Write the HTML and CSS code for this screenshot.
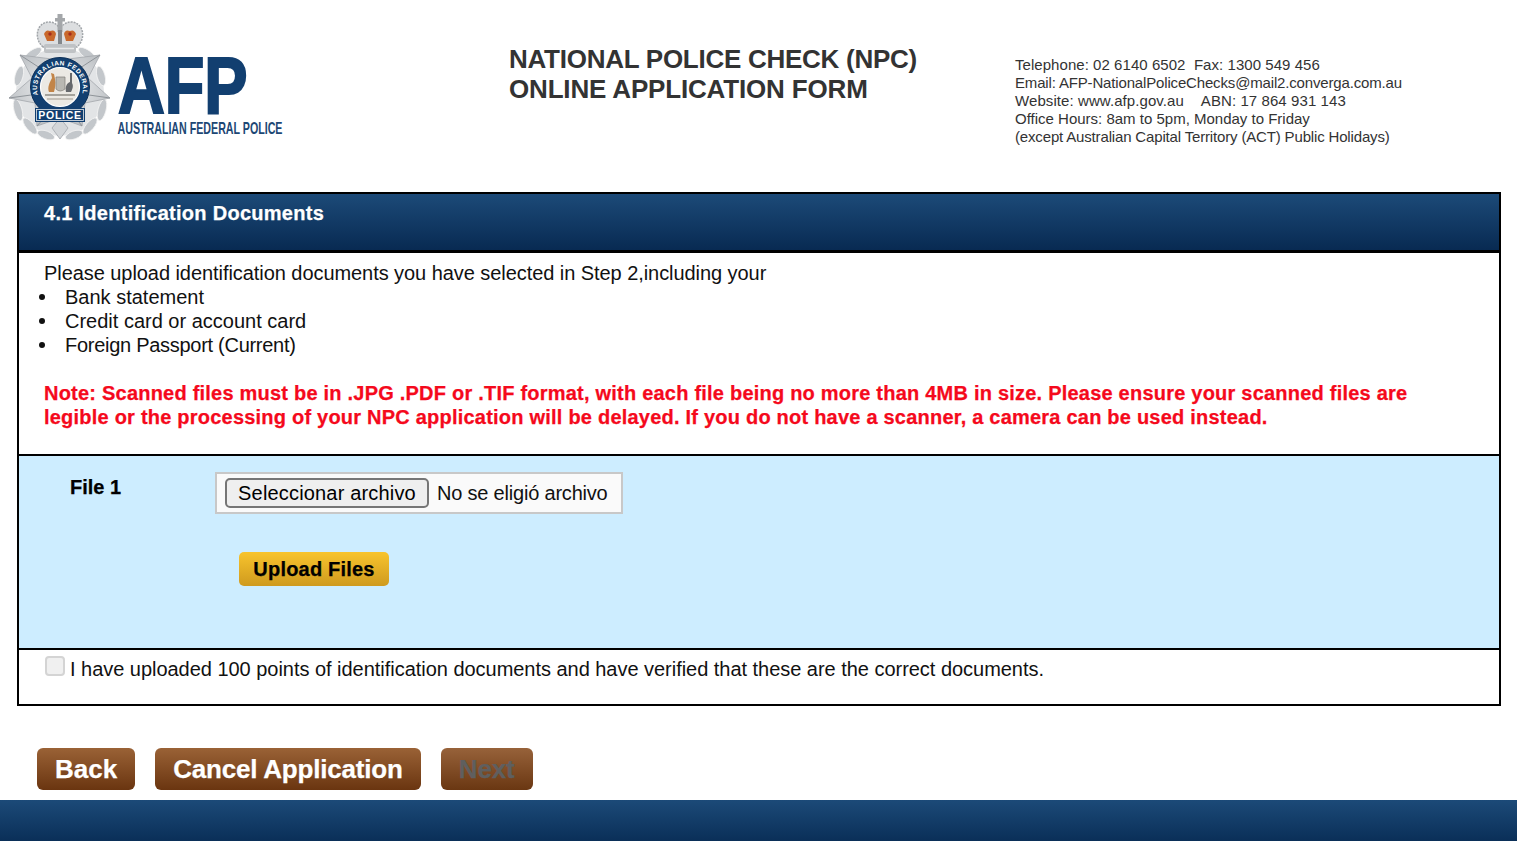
FILE: index.html
```
<!DOCTYPE html>
<html lang="en">
<head>
<meta charset="utf-8">
<title>National Police Check Online Application Form</title>
<link rel="stylesheet" href="styles.css">
</head>
<body>
<header class="masthead">
  <svg class="logo" viewBox="0 0 300 150" width="300" height="150" role="img" aria-label="Australian Federal Police">
    <defs>
      <radialGradient id="silver" cx="50%" cy="45%" r="60%">
        <stop offset="0" stop-color="#f4f5f6"/><stop offset="1" stop-color="#b9bdc1"/>
      </radialGradient>
      <path id="arcText" d="M38 95 A23 23 0 1 1 82 95"/>
    </defs>
    <circle cx="60" cy="92" r="44" fill="#e2e4e6"/>
    <g fill="#c3c7cb" stroke="#f4f4f4" stroke-width=".8">
      <ellipse cx="19" cy="76" rx="4" ry="10" transform="rotate(15 19 76)"/>
      <ellipse cx="101" cy="76" rx="4" ry="10" transform="rotate(-15 101 76)"/>
      <ellipse cx="18" cy="110" rx="4" ry="11" transform="rotate(-15 18 110)"/>
      <ellipse cx="102" cy="110" rx="4" ry="11" transform="rotate(15 102 110)"/>
      <ellipse cx="30" cy="126" rx="4" ry="10" transform="rotate(-40 30 126)"/>
      <ellipse cx="90" cy="126" rx="4" ry="10" transform="rotate(40 90 126)"/>
      <ellipse cx="46" cy="135" rx="4" ry="9" transform="rotate(-70 46 135)"/>
      <ellipse cx="74" cy="135" rx="4" ry="9" transform="rotate(70 74 135)"/>
      <ellipse cx="33" cy="54" rx="4" ry="10" transform="rotate(55 33 54)"/>
      <ellipse cx="87" cy="54" rx="4" ry="10" transform="rotate(-55 87 54)"/>
    </g>
    <path d="M60 60 L100 55 L88 78 L110 98 L85 103 L82 126 L60 118 L37 126 L35 103 L9 98 L32 78 L20 55Z" fill="url(#silver)" stroke="#a3a7ac" stroke-width=".8"/>
    <path d="M60 118 L52 128 L60 139 L68 128Z" fill="#d3d6d9" stroke="#a3a7ac" stroke-width=".8"/>
    <path d="M20 55 L40 68M100 55 L80 68M9 98 L31 95M110 98 L89 95M37 126 L44 118M82 126 L76 118" stroke="#8f9499" stroke-width="1" fill="none"/>
    <path d="M43 47 C33 38 37 22 49 22 C54 22 58 25 60 29 C62 25 66 22 71 22 C83 22 87 38 77 47Z" fill="#dcdee0" stroke="#a1a5a9" stroke-width="1.500" stroke-dasharray="2 1"/>
    <rect x="57.500" y="14" width="5" height="18" fill="#a4a7aa"/>
    <rect x="55" y="18" width="10" height="3.500" fill="#a4a7aa"/>
    <path d="M44 34 Q46 29 50 31 Q55 29 56 34 L54 41 H47Z" fill="#c9682b"/>
    <path d="M64 34 Q65 29 70 31 Q74 29 76 34 L73 41 H66Z" fill="#c9682b"/>
    <circle cx="50" cy="34" r="1.700" fill="#a62c1b"/><circle cx="70" cy="34" r="1.700" fill="#a62c1b"/>
    <rect x="58" y="30" width="4" height="14" fill="#83878b"/>
    <rect x="44" y="44" width="32" height="9" rx="2" fill="#bfc2c5"/>
    <path d="M46 48.500 H74" stroke="#e8e9ea" stroke-width="1.500"/>
    <circle cx="60" cy="87" r="29.500" fill="#123f70" stroke="#0b2f57" stroke-width="1"/>
    <circle cx="60" cy="87" r="19.500" fill="#ebe9e3" stroke="#fff" stroke-width="1.200"/>
    <text class="badge-arc" textLength="84"><textPath href="#arcText">AUSTRALIAN FEDERAL</textPath></text>
    <path d="M49 92 C47 87 50 82 52 78 L51 73 L54 74 L55 79 C56 84 55 88 54 92Z" fill="#c28548"/>
    <path d="M56 77 H65 V89 Q60 93 56 89Z" fill="#b9b8b2" stroke="#7f7c75" stroke-width=".7"/>
    <path d="M66 92 C65 86 67 83 70 82 L70 73 L72 73 L72 83 C74 86 72 90 71 92Z" fill="#66696c"/>
    <path d="M45 95 H75" stroke="#94918a" stroke-width="1.600"/>
    <path d="M47 99 H73" stroke="#b5b1a6" stroke-width="1.400"/>
    <rect x="35" y="108" width="50" height="14" fill="#123f70"/>
    <rect x="36.500" y="109.500" width="47" height="11" fill="#123f70" stroke="#e8eaec" stroke-width=".8"/>
    <text class="badge-police" x="60" y="119" text-anchor="middle">POLICE</text>
    <text class="logo-afp" transform="translate(118 113) scale(.81 1)">AFP</text>
    <text class="logo-name" transform="translate(117.500 134) scale(.667 1)">AUSTRALIAN FEDERAL POLICE</text>
  </svg>
  <h1 class="form-title"><span class="title-line">NATIONAL POLICE CHECK (NPC)</span><span class="title-line title-line-second">ONLINE APPLICATION FORM</span></h1>
  <address class="contact">
    <span class="contact-line contact-phone">Telephone: 02 6140 6502&nbsp; Fax: 1300 549 456</span>
    <span class="contact-line contact-tight">Email: AFP-NationalPoliceChecks@mail2.converga.com.au</span>
    <span class="contact-line contact-web">Website: www.afp.gov.au &nbsp;&nbsp;&nbsp;ABN: 17 864 931 143</span>
    <span class="contact-line">Office Hours: 8am to 5pm, Monday to Friday</span>
    <span class="contact-line contact-tight">(except Australian Capital Territory (ACT) Public Holidays)</span>
  </address>
</header>

<main class="panel">
  <h2 class="panel-title">4.1 Identification Documents</h2>
  <section class="intro">
    <p class="intro-lead">Please upload identification documents you have selected in Step 2,including your</p>
    <ul class="doc-list">
      <li>Bank statement</li>
      <li>Credit card or account card</li>
      <li class="doc-tight">Foreign Passport (Current)</li>
    </ul>
    <p class="note">Note: Scanned files must be in .JPG .PDF or .TIF format, with each file being no more than 4MB in size. Please ensure your scanned files are legible or the processing of your NPC application will be delayed. If you do not have a scanner, a camera can be used instead.</p>
  </section>
  <section class="upload">
    <div class="file-row">
      <span class="file-label">File 1</span>
      <div class="file-box">
        <span class="file-button">Seleccionar archivo</span>
        <span class="file-status">No se eligió archivo</span>
      </div>
    </div>
    <button class="upload-button" type="button">Upload Files</button>
  </section>
  <label class="confirm">
    <span class="confirm-box"></span>
    <span class="confirm-text">I have uploaded 100 points of identification documents and have verified that these are the correct documents.</span>
  </label>
</main>

<nav class="actions">
  <button class="action" type="button">Back</button>
  <button class="action action-tight" type="button">Cancel Application</button>
  <button class="action action-tight action-disabled" type="button">Next</button>
</nav>
<footer class="page-footer"></footer>
</body>
</html>
```

FILE: styles.css
```
* { box-sizing: border-box; }
html, body { height: 100%; }
body {
  margin: 0;
  height: 841px;
  overflow: hidden;
  background: #fff;
  color: #111;
  font-family: "Liberation Sans", Arial, sans-serif;
  font-size: 20px;
  display: flex;
  flex-direction: column;
}
.masthead { height: 192px; display: flex; flex: none; }
.logo { flex: none; display: block; }
.badge-arc { font: bold 6.500px "Liberation Sans", sans-serif; fill: #fff; }
.badge-police { font: bold 10.500px "Liberation Sans", sans-serif; fill: #fff; letter-spacing: .7px; }
.logo-afp { font: bold 80px "Liberation Sans", sans-serif; fill: #123f70; stroke: #123f70; stroke-width: 2.2px; }
.logo-name { font: bold 16px "Liberation Sans", sans-serif; fill: #1d4774; }
.form-title {
  margin: 44px 0 0 209px;
  width: 506px;
  flex: none;
  font-size: 26px;
  line-height: 30px;
  font-weight: bold;
  color: #333;
  white-space: nowrap;
}
.title-line { display: block; letter-spacing: -.26px; }
.title-line-second { letter-spacing: -.17px; }
.contact {
  margin: 56px 0 0 0;
  font-style: normal;
  font-size: 15px;
  line-height: 18px;
  color: #333;
  white-space: nowrap;
}
.contact-line { display: block; }
.contact-phone { letter-spacing: .05px; }
.contact-web { letter-spacing: .08px; }
.contact-tight { letter-spacing: -.16px; }
.panel { margin: 0 16px 0 17px; height: 514px; flex: none; border: 2px solid #000; display: flex; flex-direction: column; }
.panel-title {
  margin: 0;
  height: 59px;
  flex: none;
  padding: 8px 0 0 25px;
  font-size: 20px;
  line-height: 23px;
  font-weight: bold;
  letter-spacing: .28px;
  color: #fff;
  background: linear-gradient(#1c4a78, #082a52);
  border-bottom: 3px solid #000;
}
.intro { height: 203px; flex: none; padding: 8px 25px 0; border-bottom: 2px solid #000; line-height: 24px; }
.intro-lead { margin: 0; letter-spacing: -.06px; }
.doc-list { margin: 0; padding: 0; list-style: none; }
.doc-list li { display: flex; align-items: center; gap: 20px; margin-left: -5px; }
.doc-list li::before { content: ""; width: 6px; height: 6px; border-radius: 50%; background: #111; flex: none; }
.doc-tight { letter-spacing: -.28px; }
.note { margin: 24px 0 0; color: #f5091c; font-weight: bold; letter-spacing: .22px; }
.upload { height: 192px; flex: none; background: #cdedff; padding: 16px 0 0 51px; }
.file-row { display: flex; align-items: flex-start; }
.file-label { width: 145px; font-weight: bold; line-height: 30px; color: #000; flex: none; }
.file-box {
  width: 408px;
  height: 42px;
  display: flex;
  align-items: center;
  gap: 8px;
  padding: 0 8px;
  background: #fafafa;
  border: 2px solid #c8c8c8;
  white-space: nowrap;
}
.file-button {
  height: 30px;
  width: 204px;
  flex: none;
  text-align: center;
  line-height: 26px;
  letter-spacing: .17px;
  background: #efefef;
  border: 2px solid #767676;
  border-radius: 5px;
  color: #000;
}
.file-status { letter-spacing: -.2px; }
.upload-button {
  display: block;
  margin: 38px 0 0 169px;
  width: 150px;
  height: 34px;
  padding: 0;
  border: 0;
  border-radius: 5px;
  background: linear-gradient(#f8c42d, #cf9a1e);
  font: bold 20px "Liberation Sans", sans-serif;
  letter-spacing: .2px;
  color: #000;
}
.confirm { display: flex; flex: 1; padding: 7px 0 0 26px; line-height: 24px; align-items: flex-start; border-top: 2px solid #000; }
.confirm-box {
  width: 20px;
  height: 20px;
  margin: -1px 5px 0 0;
  background: #f0f0f0;
  border: 2px solid #d4d4d4;
  border-radius: 4px;
  flex: none;
}
.confirm-text { letter-spacing: -.03px; }
.actions { margin-top: 42px; padding-left: 37px; display: flex; gap: 20px; flex: none; }
.action {
  height: 42px;
  padding: 0 18px;
  border: 0;
  border-radius: 6px;
  background: linear-gradient(#9a6236, #6a3510);
  font: bold 26px "Liberation Sans", sans-serif;
  color: #fff;
}
.action-tight { letter-spacing: -.2px; }
.action-disabled { color: #5f5f5f; background: linear-gradient(#97623a, #6a3712); width: 92px; }
.page-footer { margin-top: 10px; flex: 1; background: linear-gradient(#1c4a78, #0a2f58); }
.panel-title, .note, .upload-button, .file-label, .action { -webkit-text-stroke: .25px currentColor; }
```
